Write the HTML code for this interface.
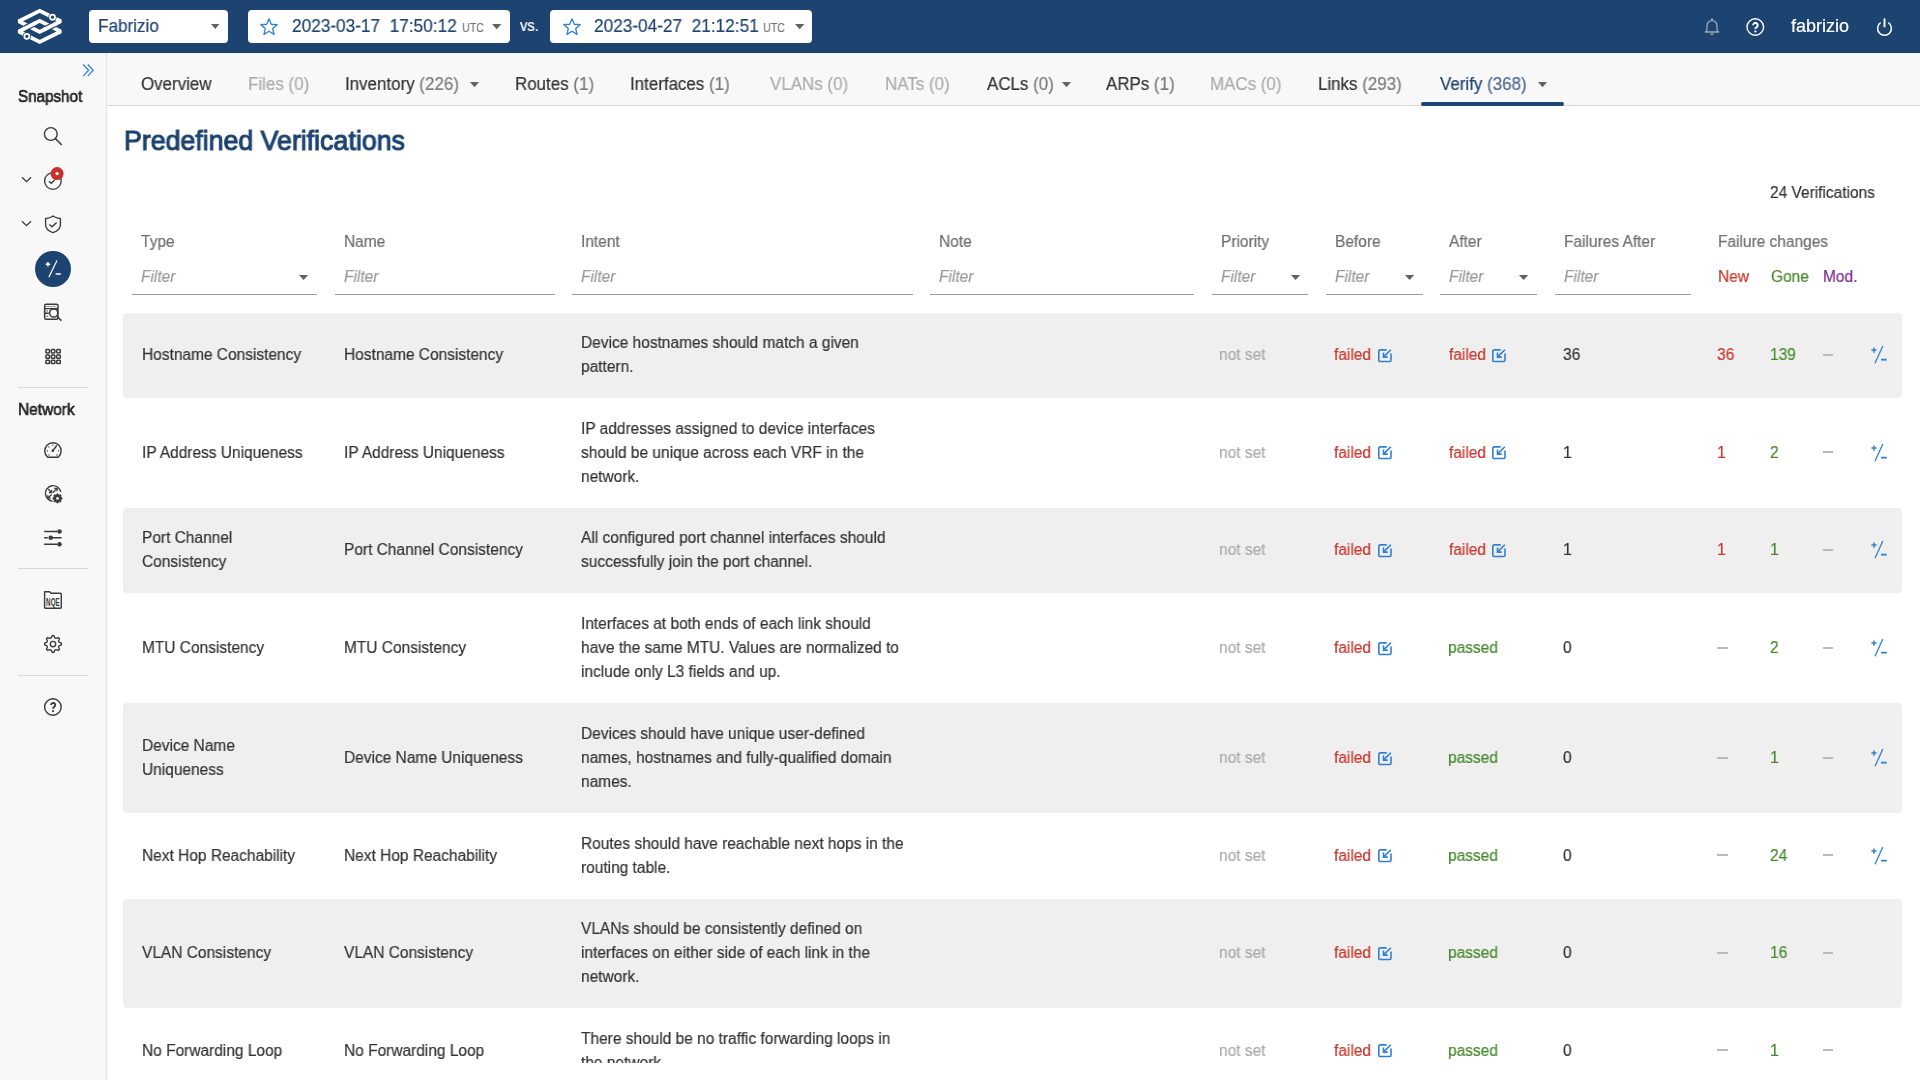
<!DOCTYPE html>
<html><head><meta charset="utf-8"><title>Predefined Verifications</title><style>
*{box-sizing:border-box}
html,body{margin:0;padding:0}
body{width:1920px;height:1080px;overflow:hidden;position:relative;background:#fff;font-family:"Liberation Sans",sans-serif;}
.t{position:absolute;white-space:nowrap;will-change:transform;-webkit-text-stroke:0.2px currentColor}
.ic{position:absolute;overflow:visible}
.box{position:absolute}
</style></head><body>
<div class="box" style="left:0;top:0;width:1920px;height:53px;background:#1d4370"></div>
<svg class="ic" style="left:14px;top:5px;" width="52" height="44" viewBox="0 0 1276 1080"><path d="M630 390L116 650L630 905L1148 650Z" stroke="#fff" stroke-width="92" fill="none" stroke-linejoin="miter" stroke-miterlimit="1.5"/><path d="M630 145L116 400L630 660L1148 400Z" stroke="#fff" stroke-width="92" fill="none" stroke-linejoin="miter" stroke-miterlimit="1.5"/><path d="M785 582L993 478" stroke="#1d4370" stroke-width="152" stroke-linecap="butt" fill="none"/><path d="M734 608L1044 452" stroke="#fff" stroke-width="92" stroke-linecap="butt" fill="none"/><path d="M476 468L270 572" stroke="#1d4370" stroke-width="152" stroke-linecap="butt" fill="none"/><path d="M527 442L219 598" stroke="#fff" stroke-width="92" stroke-linecap="butt" fill="none"/><circle cx="945" cy="300" r="100" fill="#1d4370"/><circle cx="945" cy="300" r="62" fill="none" stroke="#fff" stroke-width="44"/><circle cx="315" cy="770" r="100" fill="#1d4370"/><circle cx="315" cy="770" r="62" fill="none" stroke="#fff" stroke-width="44"/></svg>
<div class="box" style="left:89px;top:10px;width:139px;height:33px;background:#fff;border-radius:4px"></div>
<div class="t" style="left:98.30px;top:13.94px;font-size:17.5px;line-height:24px;color:#1d4370;transform:scaleX(0.978);transform-origin:0 0;">Fabrizio</div>
<svg class="ic" style="left:210.8px;top:24.2px;" width="8.4" height="5" viewBox="0 0 8.4 5"><path d="M0 0H8.4L4.2 5Z" fill="#616161"/></svg>
<div class="box" style="left:247.8px;top:10.2px;width:262.3px;height:32.8px;background:#fff;border-radius:4px"></div>
<svg class="ic" style="left:260.3px;top:17.6px;" width="18" height="18" viewBox="0 0 18 18"><polygon points="9.00,0.80 11.29,6.24 17.18,6.74 12.71,10.61 14.05,16.36 9.00,13.30 3.95,16.36 5.29,10.61 0.82,6.74 6.71,6.24" fill="none" stroke="#2f80d1" stroke-width="1.3" stroke-linejoin="round"/></svg>
<div class="t" style="left:291.60px;top:13.94px;font-size:17.5px;line-height:24px;color:#1d4370;transform:scaleX(0.984);transform-origin:0 0;">2023-03-17&nbsp; 17:50:12</div>
<div class="t" style="left:461.60px;top:18.50px;font-size:13px;line-height:18px;color:#757575;transform:scaleX(0.82);transform-origin:0 0;">UTC</div>
<svg class="ic" style="left:492.3px;top:24.2px;" width="9.4" height="5.2" viewBox="0 0 9.4 5.2"><path d="M0 0H9.4L4.7 5.2Z" fill="#616161"/></svg>
<div class="box" style="left:549.5px;top:10.2px;width:262.3px;height:32.8px;background:#fff;border-radius:4px"></div>
<svg class="ic" style="left:562.5px;top:17.6px;" width="18" height="18" viewBox="0 0 18 18"><polygon points="9.00,0.80 11.29,6.24 17.18,6.74 12.71,10.61 14.05,16.36 9.00,13.30 3.95,16.36 5.29,10.61 0.82,6.74 6.71,6.24" fill="none" stroke="#2f80d1" stroke-width="1.3" stroke-linejoin="round"/></svg>
<div class="t" style="left:593.75px;top:13.94px;font-size:17.5px;line-height:24px;color:#1d4370;transform:scaleX(0.984);transform-origin:0 0;">2023-04-27&nbsp; 21:12:51</div>
<div class="t" style="left:763.00px;top:18.50px;font-size:13px;line-height:18px;color:#757575;transform:scaleX(0.82);transform-origin:0 0;">UTC</div>
<svg class="ic" style="left:794.5px;top:24.2px;" width="9.4" height="5.2" viewBox="0 0 9.4 5.2"><path d="M0 0H9.4L4.7 5.2Z" fill="#616161"/></svg>
<div class="t" style="left:520.30px;top:15.46px;font-size:16px;line-height:22px;color:#fff;transform:scaleX(0.92);transform-origin:0 0;">vs.</div>
<svg class="ic" style="left:1703.8px;top:17.6px;" width="16" height="18" viewBox="0 0 16 18"><path d="M3 12.4V7.6a5 5 0 0 1 10 0v4.8l1.7 1.6H1.3z" fill="none" stroke="#9aa9bd" stroke-width="1.3" stroke-linejoin="round"/><circle cx="8" cy="1.4" r="1.1" fill="#9aa9bd"/><path d="M6.2 15.4a1.8 1.8 0 0 0 3.6 0z" fill="#9aa9bd"/></svg>
<svg class="ic" style="left:1746px;top:17.9px;" width="18.6" height="18" viewBox="0 0 18.6 18"><circle cx="9.3" cy="9" r="8.3" fill="none" stroke="#fff" stroke-width="1.4"/><path d="M7.1 7.2a2.3 2.3 0 1 1 3.6 1.9c-.85.55-1.3.95-1.3 2.0" fill="none" stroke="#fff" stroke-width="2"/><circle cx="9.4" cy="13.4" r="1.15" fill="#fff"/></svg>
<div class="t" style="left:1790.80px;top:14.36px;font-size:18px;line-height:25px;color:#fff;">fabrizio</div>
<svg class="ic" style="left:1876px;top:17.6px;" width="17" height="18" viewBox="0 0 17 18"><path d="M4.6 4.7A6.9 6.9 0 1 0 12.4 4.7" fill="none" stroke="#fff" stroke-width="1.5"/><path d="M8.5 1.2V8.4" stroke="#fff" stroke-width="1.9" stroke-linecap="round"/></svg>
<div class="box" style="left:0;top:53px;width:107px;height:1027px;background:#f8f8f8;border-right:1px solid #e4e4e4;box-shadow:1px 0 2px rgba(0,0,0,0.04)"></div>
<svg class="ic" style="left:82px;top:63px;" width="13" height="15" viewBox="0 0 13 15"><path d="M1.2 1.2L6.6 7L1.2 12.8M5.8 1.2L11.2 7L5.8 12.8" fill="none" stroke="#2f80d1" stroke-width="1.25" transform="translate(0,0.3)"/></svg>
<div class="t" style="left:18.30px;top:86.06px;font-size:16px;line-height:22px;color:#222;transform:scaleX(0.95);transform-origin:0 0;-webkit-text-stroke:0.6px #222;">Snapshot</div>
<svg class="ic" style="left:41px;top:124px;" width="24" height="24" viewBox="0 0 24 24"><circle cx="9.8" cy="10" r="6.4" fill="none" stroke="#3a3a3a" stroke-width="1.4"/><path d="M14.4 14.6L20.8 21" stroke="#3a3a3a" stroke-width="1.5"/></svg>
<svg class="ic" style="left:21px;top:176.0px;" width="11" height="7" viewBox="0 0 11 7"><path d="M1 1.2L5.5 5.6L10 1.2" fill="none" stroke="#3a3a3a" stroke-width="1.3"/></svg>
<svg class="ic" style="left:21px;top:219.5px;" width="11" height="7" viewBox="0 0 11 7"><path d="M1 1.2L5.5 5.6L10 1.2" fill="none" stroke="#3a3a3a" stroke-width="1.3"/></svg>
<svg class="ic" style="left:41px;top:168.6px;" width="24" height="24" viewBox="0 0 24 24"><circle cx="11.9" cy="12" r="8.3" fill="none" stroke="#3a3a3a" stroke-width="1.35"/><path d="M8 12.2L10.3 14.3L13.8 10.8" fill="none" stroke="#3a3a3a" stroke-width="1.3"/><circle cx="16.1" cy="4.6" r="6.5" fill="#c9302c"/><circle cx="16.1" cy="4.6" r="1.7" fill="#fff"/></svg>
<svg class="ic" style="left:41px;top:212px;" width="24" height="24" viewBox="0 0 24 24"><path d="M12 3.9C10.5 5.2 8.2 5.9 4.6 6.4V12.6C4.6 16.6 7.6 19.4 12 20.7C16.4 19.4 19.4 16.6 19.4 12.6V6.4C15.8 5.9 13.5 5.2 12 3.9Z" fill="none" stroke="#3a3a3a" stroke-width="1.35" stroke-linejoin="round"/><path d="M8.4 12.5L11 14.8L15.6 10.4" fill="none" stroke="#3a3a3a" stroke-width="1.35"/></svg>
<div class="box" style="left:35px;top:250.8px;width:35.8px;height:35.8px;border-radius:50%;background:#1d4370"></div>
<svg class="ic" style="left:35px;top:250.8px;" width="36" height="36" viewBox="0 0 36 36"><path d="M10.6 13.3H15.2M12.9 11V15.6" stroke="#fff" stroke-width="1.5"/><path d="M22 9.6L13.8 26.3" stroke="#fff" stroke-width="1.2"/><path d="M20.6 23H25.8" stroke="#fff" stroke-width="1.5"/></svg>
<svg class="ic" style="left:40.3px;top:300.2px;" width="24" height="24" viewBox="0 0 24 24"><rect x="4.65" y="4.35" width="13.3" height="15.0" rx="1.5" fill="none" stroke="#3a3a3a" stroke-width="1.5"/><path d="M4.65 8.6H17.9M4.65 13.2H8.8" stroke="#3a3a3a" stroke-width="1.4"/><path d="M6.4 6.5H16.2" stroke="#3a3a3a" stroke-width="0.9" stroke-dasharray="1 1"/><path d="M6.2 11H8M6.2 16.3H8" stroke="#3a3a3a" stroke-width="0.8"/><circle cx="13.7" cy="13.0" r="4.1" fill="#f8f8f8" stroke="#3a3a3a" stroke-width="1.5"/><path d="M16.8 16.2L21.4 20.6" stroke="#3a3a3a" stroke-width="1.5"/></svg>
<svg class="ic" style="left:41px;top:345px;" width="24" height="24" viewBox="0 0 24 24"><rect x="4.9" y="4.6" width="3.6" height="3.4" rx="0.9" fill="none" stroke="#3a3a3a" stroke-width="1.5"/><rect x="4.9" y="9.9" width="3.6" height="3.4" rx="0.9" fill="none" stroke="#3a3a3a" stroke-width="1.5"/><rect x="4.9" y="15.2" width="3.6" height="3.4" rx="0.9" fill="none" stroke="#3a3a3a" stroke-width="1.5"/><rect x="10.3" y="4.6" width="3.6" height="3.4" rx="0.9" fill="none" stroke="#3a3a3a" stroke-width="1.5"/><rect x="10.3" y="9.9" width="3.6" height="3.4" rx="0.9" fill="none" stroke="#3a3a3a" stroke-width="1.5"/><rect x="10.3" y="15.2" width="3.6" height="3.4" rx="0.9" fill="none" stroke="#3a3a3a" stroke-width="1.5"/><rect x="15.7" y="4.6" width="3.6" height="3.4" rx="0.9" fill="none" stroke="#3a3a3a" stroke-width="1.5"/><rect x="15.7" y="9.9" width="3.6" height="3.4" rx="0.9" fill="none" stroke="#3a3a3a" stroke-width="1.5"/><rect x="15.7" y="15.2" width="3.6" height="3.4" rx="0.9" fill="none" stroke="#3a3a3a" stroke-width="1.5"/></svg>
<div class="box" style="left:18px;top:387px;width:70px;height:1px;background:#d9d9d9"></div>
<div class="box" style="left:18px;top:568px;width:70px;height:1px;background:#d9d9d9"></div>
<div class="box" style="left:18px;top:675px;width:70px;height:1px;background:#d9d9d9"></div>
<div class="t" style="left:18.10px;top:399.26px;font-size:16px;line-height:22px;color:#222;transform:scaleX(0.965);transform-origin:0 0;-webkit-text-stroke:0.6px #222;">Network</div>
<svg class="ic" style="left:41.1px;top:437.8px;" width="24" height="24" viewBox="0 0 24 24"><path d="M6.7 19.2A8.2 8.2 0 1 1 17.2 19.2Z" fill="none" stroke="#3a3a3a" stroke-width="1.4" stroke-linejoin="round"/><path d="M11.8 12.7L15.9 7.4" stroke="#3a3a3a" stroke-width="1.5"/><circle cx="11.8" cy="12.7" r="1.3" fill="#3a3a3a"/><g fill="#3a3a3a"><circle cx="11.9" cy="7.2" r="0.65"/><circle cx="7.9" cy="8.9" r="0.65"/><circle cx="6.4" cy="12.9" r="0.65"/><circle cx="17.5" cy="12.9" r="0.65"/><circle cx="8.0" cy="17.0" r="0.65"/><circle cx="15.9" cy="17.0" r="0.65"/></g></svg>
<svg class="ic" style="left:41px;top:480.6px;" width="24" height="24" viewBox="0 0 24 24"><path d="M13.4 19.9A7.7 7.7 0 1 1 19.7 11.0" fill="none" stroke="#3a3a3a" stroke-width="1.35"/><path d="M7.1 8.0L10.7 11.7M10.7 8.9V11.7H7.9" stroke="#3a3a3a" stroke-width="1.25" fill="none"/><path d="M11.9 11.7L16.1 7.4M13.3 7.4H16.1V10.2" stroke="#3a3a3a" stroke-width="1.25" fill="none"/><path d="M10.7 13.5L6.8 17.1M6.8 14.3V17.1H9.6" stroke="#3a3a3a" stroke-width="1.25" fill="none"/><circle cx="16.5" cy="17.4" r="5.6" fill="#f8f8f8"/><polygon points="21.40,17.40 19.83,18.78 19.96,20.86 17.88,20.73 16.50,22.30 15.12,20.73 13.04,20.86 13.17,18.78 11.60,17.40 13.17,16.02 13.04,13.94 15.12,14.07 16.50,12.50 17.88,14.07 19.96,13.94 19.83,16.02" fill="#3a3a3a" stroke="#3a3a3a" stroke-width="0.9" stroke-linejoin="round"/><circle cx="16.5" cy="17.4" r="1.4" fill="#f8f8f8"/></svg>
<svg class="ic" style="left:41px;top:528px;" width="24" height="20" viewBox="0 0 24 20"><path d="M3.2 3.5H16M3.2 16.2H16M3.2 9.8H6.8M11.3 9.8H20.6" stroke="#3a3a3a" stroke-width="1.4"/><circle cx="18.5" cy="3.5" r="2.3" fill="#3a3a3a"/><circle cx="18.5" cy="16.2" r="2.3" fill="#3a3a3a"/><circle cx="9.7" cy="9.8" r="2.3" fill="#3a3a3a"/></svg>
<svg class="ic" style="left:40px;top:589px;" width="24" height="22" viewBox="0 0 24 22"><path d="M4.6 2.7H9.6L11.0 4.2H20.3A1 1 0 0 1 21.3 5.2V18.3A1 1 0 0 1 20.3 19.3H5.6A1 1 0 0 1 4.6 18.3Z" fill="none" stroke="#3a3a3a" stroke-width="1.4" stroke-linejoin="round"/><text x="6.1" y="16.6" font-family="Liberation Sans" font-weight="bold" font-size="10" textLength="13.6" lengthAdjust="spacingAndGlyphs" fill="#3a3a3a">NQE</text></svg>
<svg class="ic" style="left:41px;top:632.2px;" width="24" height="24" viewBox="0 0 24 24"><polygon points="11.18,3.64 12.82,3.64 13.83,5.97 14.97,6.44 17.33,5.51 18.49,6.67 17.56,9.03 18.03,10.17 20.36,11.18 20.36,12.82 18.03,13.83 17.56,14.97 18.49,17.33 17.33,18.49 14.97,17.56 13.83,18.03 12.82,20.36 11.18,20.36 10.17,18.03 9.03,17.56 6.67,18.49 5.51,17.33 6.44,14.97 5.97,13.83 3.64,12.82 3.64,11.18 5.97,10.17 6.44,9.03 5.51,6.67 6.67,5.51 9.03,6.44 10.17,5.97" fill="none" stroke="#3a3a3a" stroke-width="1.35" stroke-linejoin="round"/><circle cx="12" cy="12" r="2.7" fill="none" stroke="#3a3a3a" stroke-width="1.35"/></svg>
<svg class="ic" style="left:41px;top:694.8px;" width="24" height="24" viewBox="0 0 24 24"><circle cx="11.9" cy="12" r="8.3" fill="none" stroke="#3a3a3a" stroke-width="1.4"/><path d="M10.1 10.0a2.05 2.05 0 1 1 3.2 1.7c-.8.55-1.25.95-1.25 1.95" fill="none" stroke="#3a3a3a" stroke-width="1.9"/><circle cx="12" cy="16.1" r="1.1" fill="#3a3a3a"/></svg>
<div class="box" style="left:107px;top:53px;width:1813px;height:53px;background:#f8f8f8;border-bottom:1px solid #d9d9d9"></div>
<div class="t" style="left:141.25px;top:72.24px;font-size:17.5px;line-height:24px;color:#333;transform:scaleX(0.967);transform-origin:0 0;"><span style="color:#333">Overview</span></div>
<div class="t" style="left:248.00px;top:72.24px;font-size:17.5px;line-height:24px;color:#acacac;transform:scaleX(0.967);transform-origin:0 0;"><span style="color:#acacac">Files</span> <span style="color:#acacac">(0)</span></div>
<div class="t" style="left:345.00px;top:72.24px;font-size:17.5px;line-height:24px;color:#333;transform:scaleX(0.967);transform-origin:0 0;"><span style="color:#333">Inventory</span> <span style="color:#7a7a7a">(226)</span></div>
<svg class="ic" style="left:470.2px;top:81.9px;" width="9" height="5.3" viewBox="0 0 9 5.3"><path d="M0 0H9L4.5 5.3Z" fill="#616161"/></svg>
<div class="t" style="left:515.00px;top:72.24px;font-size:17.5px;line-height:24px;color:#333;transform:scaleX(0.967);transform-origin:0 0;"><span style="color:#333">Routes</span> <span style="color:#7a7a7a">(1)</span></div>
<div class="t" style="left:630.00px;top:72.24px;font-size:17.5px;line-height:24px;color:#333;transform:scaleX(0.967);transform-origin:0 0;"><span style="color:#333">Interfaces</span> <span style="color:#7a7a7a">(1)</span></div>
<div class="t" style="left:770.00px;top:72.24px;font-size:17.5px;line-height:24px;color:#acacac;transform:scaleX(0.967);transform-origin:0 0;"><span style="color:#acacac">VLANs</span> <span style="color:#acacac">(0)</span></div>
<div class="t" style="left:884.50px;top:72.24px;font-size:17.5px;line-height:24px;color:#acacac;transform:scaleX(0.967);transform-origin:0 0;"><span style="color:#acacac">NATs</span> <span style="color:#acacac">(0)</span></div>
<div class="t" style="left:987.00px;top:72.24px;font-size:17.5px;line-height:24px;color:#333;transform:scaleX(0.967);transform-origin:0 0;"><span style="color:#333">ACLs</span> <span style="color:#7a7a7a">(0)</span></div>
<svg class="ic" style="left:1061.5px;top:81.9px;" width="9" height="5.3" viewBox="0 0 9 5.3"><path d="M0 0H9L4.5 5.3Z" fill="#616161"/></svg>
<div class="t" style="left:1106.00px;top:72.24px;font-size:17.5px;line-height:24px;color:#333;transform:scaleX(0.967);transform-origin:0 0;"><span style="color:#333">ARPs</span> <span style="color:#7a7a7a">(1)</span></div>
<div class="t" style="left:1209.50px;top:72.24px;font-size:17.5px;line-height:24px;color:#acacac;transform:scaleX(0.967);transform-origin:0 0;"><span style="color:#acacac">MACs</span> <span style="color:#acacac">(0)</span></div>
<div class="t" style="left:1317.50px;top:72.24px;font-size:17.5px;line-height:24px;color:#333;transform:scaleX(0.967);transform-origin:0 0;"><span style="color:#333">Links</span> <span style="color:#7a7a7a">(293)</span></div>
<div class="t" style="left:1439.50px;top:72.24px;font-size:17.5px;line-height:24px;color:#1d4370;transform:scaleX(0.967);transform-origin:0 0;"><span style="color:#1d4370">Verify</span> <span style="color:#4d6b91">(368)</span></div>
<svg class="ic" style="left:1537.7px;top:81.9px;" width="9" height="5.3" viewBox="0 0 9 5.3"><path d="M0 0H9L4.5 5.3Z" fill="#616161"/></svg>
<div class="box" style="left:1421px;top:101.6px;width:143px;height:4px;border-radius:2px;background:#1d4370"></div>
<div class="t" style="left:124.00px;top:121.74px;font-size:27px;line-height:38px;color:#1d4370;transform:scaleX(0.99);transform-origin:0 0;-webkit-text-stroke:1.05px #1d4370;">Predefined Verifications</div>
<div class="t" style="left:1769.60px;top:182.21px;font-size:16px;line-height:22px;color:#333;transform:scaleX(0.967);transform-origin:0 0;">24 Verifications</div>
<div class="t" style="left:141.25px;top:230.96px;font-size:16px;line-height:22px;color:#6e6e6e;transform:scaleX(0.967);transform-origin:0 0;">Type</div>
<div class="t" style="left:343.75px;top:230.96px;font-size:16px;line-height:22px;color:#6e6e6e;transform:scaleX(0.967);transform-origin:0 0;">Name</div>
<div class="t" style="left:581.25px;top:230.96px;font-size:16px;line-height:22px;color:#6e6e6e;transform:scaleX(0.967);transform-origin:0 0;">Intent</div>
<div class="t" style="left:939.25px;top:230.96px;font-size:16px;line-height:22px;color:#6e6e6e;transform:scaleX(0.967);transform-origin:0 0;">Note</div>
<div class="t" style="left:1220.50px;top:230.96px;font-size:16px;line-height:22px;color:#6e6e6e;transform:scaleX(0.967);transform-origin:0 0;">Priority</div>
<div class="t" style="left:1335.00px;top:230.96px;font-size:16px;line-height:22px;color:#6e6e6e;transform:scaleX(0.967);transform-origin:0 0;">Before</div>
<div class="t" style="left:1449.25px;top:230.96px;font-size:16px;line-height:22px;color:#6e6e6e;transform:scaleX(0.967);transform-origin:0 0;">After</div>
<div class="t" style="left:1563.75px;top:230.96px;font-size:16px;line-height:22px;color:#6e6e6e;transform:scaleX(0.967);transform-origin:0 0;">Failures After</div>
<div class="t" style="left:1717.50px;top:230.96px;font-size:16px;line-height:22px;color:#6e6e6e;transform:scaleX(0.967);transform-origin:0 0;">Failure changes</div>
<div class="t" style="left:141.25px;top:266.46px;font-size:16px;line-height:22px;color:#9a9a9a;font-style:italic;transform:scaleX(0.967);transform-origin:0 0;">Filter</div>
<div class="box" style="left:132px;top:293.8px;width:185px;height:1.2px;background:#9e9e9e"></div>
<svg class="ic" style="left:299px;top:274.5px;" width="9.2" height="5.1" viewBox="0 0 9.2 5.1"><path d="M0 0H9.2L4.6 5.1Z" fill="#616161"/></svg>
<div class="t" style="left:343.75px;top:266.46px;font-size:16px;line-height:22px;color:#9a9a9a;font-style:italic;transform:scaleX(0.967);transform-origin:0 0;">Filter</div>
<div class="box" style="left:335px;top:293.8px;width:219.5px;height:1.2px;background:#9e9e9e"></div>
<div class="t" style="left:581.25px;top:266.46px;font-size:16px;line-height:22px;color:#9a9a9a;font-style:italic;transform:scaleX(0.967);transform-origin:0 0;">Filter</div>
<div class="box" style="left:572px;top:293.8px;width:340.5px;height:1.2px;background:#9e9e9e"></div>
<div class="t" style="left:939.25px;top:266.46px;font-size:16px;line-height:22px;color:#9a9a9a;font-style:italic;transform:scaleX(0.967);transform-origin:0 0;">Filter</div>
<div class="box" style="left:930px;top:293.8px;width:264px;height:1.2px;background:#9e9e9e"></div>
<div class="t" style="left:1220.50px;top:266.46px;font-size:16px;line-height:22px;color:#9a9a9a;font-style:italic;transform:scaleX(0.967);transform-origin:0 0;">Filter</div>
<div class="box" style="left:1211.5px;top:293.8px;width:96.75px;height:1.2px;background:#9e9e9e"></div>
<svg class="ic" style="left:1290.8px;top:274.5px;" width="9.2" height="5.1" viewBox="0 0 9.2 5.1"><path d="M0 0H9.2L4.6 5.1Z" fill="#616161"/></svg>
<div class="t" style="left:1335.00px;top:266.46px;font-size:16px;line-height:22px;color:#9a9a9a;font-style:italic;transform:scaleX(0.967);transform-origin:0 0;">Filter</div>
<div class="box" style="left:1326px;top:293.8px;width:96.75px;height:1.2px;background:#9e9e9e"></div>
<svg class="ic" style="left:1405.2px;top:274.5px;" width="9.2" height="5.1" viewBox="0 0 9.2 5.1"><path d="M0 0H9.2L4.6 5.1Z" fill="#616161"/></svg>
<div class="t" style="left:1449.25px;top:266.46px;font-size:16px;line-height:22px;color:#9a9a9a;font-style:italic;transform:scaleX(0.967);transform-origin:0 0;">Filter</div>
<div class="box" style="left:1440.25px;top:293.8px;width:96.75px;height:1.2px;background:#9e9e9e"></div>
<svg class="ic" style="left:1519.3px;top:274.5px;" width="9.2" height="5.1" viewBox="0 0 9.2 5.1"><path d="M0 0H9.2L4.6 5.1Z" fill="#616161"/></svg>
<div class="t" style="left:1563.75px;top:266.46px;font-size:16px;line-height:22px;color:#9a9a9a;font-style:italic;transform:scaleX(0.967);transform-origin:0 0;">Filter</div>
<div class="box" style="left:1555px;top:293.8px;width:135.75px;height:1.2px;background:#9e9e9e"></div>
<div class="t" style="left:1718.00px;top:266.46px;font-size:16px;line-height:22px;color:#c8372d;transform:scaleX(0.967);transform-origin:0 0;">New</div>
<div class="t" style="left:1770.50px;top:266.46px;font-size:16px;line-height:22px;color:#46892c;transform:scaleX(0.967);transform-origin:0 0;">Gone</div>
<div class="t" style="left:1823.25px;top:266.46px;font-size:16px;line-height:22px;color:#7e2b8e;transform:scaleX(0.967);transform-origin:0 0;">Mod.</div>
<div class="box" style="left:123px;top:312.5px;width:1779.2px;height:85.5px;background:#efefef;border-radius:4px"></div>
<div class="t" style="left:141.50px;top:344.16px;font-size:16px;line-height:22px;color:#333;transform:scaleX(0.967);transform-origin:0 0;">Hostname Consistency</div>
<div class="t" style="left:343.50px;top:344.16px;font-size:16px;line-height:22px;color:#333;transform:scaleX(0.967);transform-origin:0 0;">Hostname Consistency</div>
<div class="t" style="left:581.00px;top:332.16px;font-size:16px;line-height:22px;color:#333;transform:scaleX(0.967);transform-origin:0 0;">Device hostnames should match a given</div>
<div class="t" style="left:581.00px;top:356.16px;font-size:16px;line-height:22px;color:#333;transform:scaleX(0.967);transform-origin:0 0;">pattern.</div>
<div class="t" style="left:1218.80px;top:344.16px;font-size:16px;line-height:22px;color:#ababab;transform:scaleX(0.967);transform-origin:0 0;">not set</div>
<div class="t" style="left:1334.00px;top:344.16px;font-size:16px;line-height:22px;color:#c8372d;transform:scaleX(0.967);transform-origin:0 0;">failed</div>
<svg class="ic" style="left:1378px;top:348.75px;" width="14" height="14" viewBox="0 0 14 14"><path d="M8.7 0.85H2.1A1.3 1.3 0 0 0 0.8 2.15V11.2A1.3 1.3 0 0 0 2.1 12.5H11.7A1.3 1.3 0 0 0 13 11.2V4.6" fill="none" stroke="#2f80d1" stroke-width="1.6"/><path d="M12.9 0.7L5.6 7.9" stroke="#2f80d1" stroke-width="1.6"/><path d="M5.5 3.6V8.1H9.8" fill="none" stroke="#2f80d1" stroke-width="1.6"/></svg>
<div class="t" style="left:1448.60px;top:344.16px;font-size:16px;line-height:22px;color:#c8372d;transform:scaleX(0.967);transform-origin:0 0;">failed</div>
<svg class="ic" style="left:1492px;top:348.75px;" width="14" height="14" viewBox="0 0 14 14"><path d="M8.7 0.85H2.1A1.3 1.3 0 0 0 0.8 2.15V11.2A1.3 1.3 0 0 0 2.1 12.5H11.7A1.3 1.3 0 0 0 13 11.2V4.6" fill="none" stroke="#2f80d1" stroke-width="1.6"/><path d="M12.9 0.7L5.6 7.9" stroke="#2f80d1" stroke-width="1.6"/><path d="M5.5 3.6V8.1H9.8" fill="none" stroke="#2f80d1" stroke-width="1.6"/></svg>
<div class="t" style="left:1562.50px;top:344.16px;font-size:16px;line-height:22px;color:#333;transform:scaleX(0.967);transform-origin:0 0;">36</div>
<div class="t" style="left:1717.00px;top:344.16px;font-size:16px;line-height:22px;color:#c8372d;transform:scaleX(0.967);transform-origin:0 0;">36</div>
<div class="t" style="left:1769.80px;top:344.16px;font-size:16px;line-height:22px;color:#46892c;transform:scaleX(0.967);transform-origin:0 0;">139</div>
<div class="box" style="left:1822.9px;top:354px;width:10.3px;height:1.6px;background:#bababa"></div>
<svg class="ic" style="left:1871px;top:346.25px;" width="16" height="18" viewBox="0 0 16 18"><path d="M0.4 4.1H5.6M3 1.5V6.7" stroke="#2f80d1" stroke-width="1.5"/><path d="M11.8 0L4 17.35" stroke="#2f80d1" stroke-width="1.3"/><path d="M10 13.65H15.7" stroke="#2f80d1" stroke-width="1.8"/></svg>
<div class="t" style="left:141.50px;top:441.76px;font-size:16px;line-height:22px;color:#333;transform:scaleX(0.967);transform-origin:0 0;">IP Address Uniqueness</div>
<div class="t" style="left:343.50px;top:441.76px;font-size:16px;line-height:22px;color:#333;transform:scaleX(0.967);transform-origin:0 0;">IP Address Uniqueness</div>
<div class="t" style="left:581.00px;top:417.76px;font-size:16px;line-height:22px;color:#333;transform:scaleX(0.967);transform-origin:0 0;">IP addresses assigned to device interfaces</div>
<div class="t" style="left:581.00px;top:441.76px;font-size:16px;line-height:22px;color:#333;transform:scaleX(0.967);transform-origin:0 0;">should be unique across each VRF in the</div>
<div class="t" style="left:581.00px;top:465.76px;font-size:16px;line-height:22px;color:#333;transform:scaleX(0.967);transform-origin:0 0;">network.</div>
<div class="t" style="left:1218.80px;top:441.76px;font-size:16px;line-height:22px;color:#ababab;transform:scaleX(0.967);transform-origin:0 0;">not set</div>
<div class="t" style="left:1334.00px;top:441.76px;font-size:16px;line-height:22px;color:#c8372d;transform:scaleX(0.967);transform-origin:0 0;">failed</div>
<svg class="ic" style="left:1378px;top:446.35px;" width="14" height="14" viewBox="0 0 14 14"><path d="M8.7 0.85H2.1A1.3 1.3 0 0 0 0.8 2.15V11.2A1.3 1.3 0 0 0 2.1 12.5H11.7A1.3 1.3 0 0 0 13 11.2V4.6" fill="none" stroke="#2f80d1" stroke-width="1.6"/><path d="M12.9 0.7L5.6 7.9" stroke="#2f80d1" stroke-width="1.6"/><path d="M5.5 3.6V8.1H9.8" fill="none" stroke="#2f80d1" stroke-width="1.6"/></svg>
<div class="t" style="left:1448.60px;top:441.76px;font-size:16px;line-height:22px;color:#c8372d;transform:scaleX(0.967);transform-origin:0 0;">failed</div>
<svg class="ic" style="left:1492px;top:446.35px;" width="14" height="14" viewBox="0 0 14 14"><path d="M8.7 0.85H2.1A1.3 1.3 0 0 0 0.8 2.15V11.2A1.3 1.3 0 0 0 2.1 12.5H11.7A1.3 1.3 0 0 0 13 11.2V4.6" fill="none" stroke="#2f80d1" stroke-width="1.6"/><path d="M12.9 0.7L5.6 7.9" stroke="#2f80d1" stroke-width="1.6"/><path d="M5.5 3.6V8.1H9.8" fill="none" stroke="#2f80d1" stroke-width="1.6"/></svg>
<div class="t" style="left:1562.50px;top:441.76px;font-size:16px;line-height:22px;color:#333;transform:scaleX(0.967);transform-origin:0 0;">1</div>
<div class="t" style="left:1717.00px;top:441.76px;font-size:16px;line-height:22px;color:#c8372d;transform:scaleX(0.967);transform-origin:0 0;">1</div>
<div class="t" style="left:1769.80px;top:441.76px;font-size:16px;line-height:22px;color:#46892c;transform:scaleX(0.967);transform-origin:0 0;">2</div>
<div class="box" style="left:1822.9px;top:451px;width:10.3px;height:1.6px;background:#bababa"></div>
<svg class="ic" style="left:1871px;top:443.85px;" width="16" height="18" viewBox="0 0 16 18"><path d="M0.4 4.1H5.6M3 1.5V6.7" stroke="#2f80d1" stroke-width="1.5"/><path d="M11.8 0L4 17.35" stroke="#2f80d1" stroke-width="1.3"/><path d="M10 13.65H15.7" stroke="#2f80d1" stroke-width="1.8"/></svg>
<div class="box" style="left:123px;top:507.7px;width:1779.2px;height:85.4px;background:#efefef;border-radius:4px"></div>
<div class="t" style="left:141.50px;top:527.31px;font-size:16px;line-height:22px;color:#333;transform:scaleX(0.967);transform-origin:0 0;">Port Channel</div>
<div class="t" style="left:141.50px;top:551.31px;font-size:16px;line-height:22px;color:#333;transform:scaleX(0.967);transform-origin:0 0;">Consistency</div>
<div class="t" style="left:343.50px;top:539.31px;font-size:16px;line-height:22px;color:#333;transform:scaleX(0.967);transform-origin:0 0;">Port Channel Consistency</div>
<div class="t" style="left:581.00px;top:527.31px;font-size:16px;line-height:22px;color:#333;transform:scaleX(0.967);transform-origin:0 0;">All configured port channel interfaces should</div>
<div class="t" style="left:581.00px;top:551.31px;font-size:16px;line-height:22px;color:#333;transform:scaleX(0.967);transform-origin:0 0;">successfully join the port channel.</div>
<div class="t" style="left:1218.80px;top:539.31px;font-size:16px;line-height:22px;color:#ababab;transform:scaleX(0.967);transform-origin:0 0;">not set</div>
<div class="t" style="left:1334.00px;top:539.31px;font-size:16px;line-height:22px;color:#c8372d;transform:scaleX(0.967);transform-origin:0 0;">failed</div>
<svg class="ic" style="left:1378px;top:543.9px;" width="14" height="14" viewBox="0 0 14 14"><path d="M8.7 0.85H2.1A1.3 1.3 0 0 0 0.8 2.15V11.2A1.3 1.3 0 0 0 2.1 12.5H11.7A1.3 1.3 0 0 0 13 11.2V4.6" fill="none" stroke="#2f80d1" stroke-width="1.6"/><path d="M12.9 0.7L5.6 7.9" stroke="#2f80d1" stroke-width="1.6"/><path d="M5.5 3.6V8.1H9.8" fill="none" stroke="#2f80d1" stroke-width="1.6"/></svg>
<div class="t" style="left:1448.60px;top:539.31px;font-size:16px;line-height:22px;color:#c8372d;transform:scaleX(0.967);transform-origin:0 0;">failed</div>
<svg class="ic" style="left:1492px;top:543.9px;" width="14" height="14" viewBox="0 0 14 14"><path d="M8.7 0.85H2.1A1.3 1.3 0 0 0 0.8 2.15V11.2A1.3 1.3 0 0 0 2.1 12.5H11.7A1.3 1.3 0 0 0 13 11.2V4.6" fill="none" stroke="#2f80d1" stroke-width="1.6"/><path d="M12.9 0.7L5.6 7.9" stroke="#2f80d1" stroke-width="1.6"/><path d="M5.5 3.6V8.1H9.8" fill="none" stroke="#2f80d1" stroke-width="1.6"/></svg>
<div class="t" style="left:1562.50px;top:539.31px;font-size:16px;line-height:22px;color:#333;transform:scaleX(0.967);transform-origin:0 0;">1</div>
<div class="t" style="left:1717.00px;top:539.31px;font-size:16px;line-height:22px;color:#c8372d;transform:scaleX(0.967);transform-origin:0 0;">1</div>
<div class="t" style="left:1769.80px;top:539.31px;font-size:16px;line-height:22px;color:#46892c;transform:scaleX(0.967);transform-origin:0 0;">1</div>
<div class="box" style="left:1822.9px;top:549px;width:10.3px;height:1.6px;background:#bababa"></div>
<svg class="ic" style="left:1871px;top:541.4px;" width="16" height="18" viewBox="0 0 16 18"><path d="M0.4 4.1H5.6M3 1.5V6.7" stroke="#2f80d1" stroke-width="1.5"/><path d="M11.8 0L4 17.35" stroke="#2f80d1" stroke-width="1.3"/><path d="M10 13.65H15.7" stroke="#2f80d1" stroke-width="1.8"/></svg>
<div class="t" style="left:141.50px;top:637.06px;font-size:16px;line-height:22px;color:#333;transform:scaleX(0.967);transform-origin:0 0;">MTU Consistency</div>
<div class="t" style="left:343.50px;top:637.06px;font-size:16px;line-height:22px;color:#333;transform:scaleX(0.967);transform-origin:0 0;">MTU Consistency</div>
<div class="t" style="left:581.00px;top:613.06px;font-size:16px;line-height:22px;color:#333;transform:scaleX(0.967);transform-origin:0 0;">Interfaces at both ends of each link should</div>
<div class="t" style="left:581.00px;top:637.06px;font-size:16px;line-height:22px;color:#333;transform:scaleX(0.967);transform-origin:0 0;">have the same MTU. Values are normalized to</div>
<div class="t" style="left:581.00px;top:661.06px;font-size:16px;line-height:22px;color:#333;transform:scaleX(0.967);transform-origin:0 0;">include only L3 fields and up.</div>
<div class="t" style="left:1218.80px;top:637.06px;font-size:16px;line-height:22px;color:#ababab;transform:scaleX(0.967);transform-origin:0 0;">not set</div>
<div class="t" style="left:1334.00px;top:637.06px;font-size:16px;line-height:22px;color:#c8372d;transform:scaleX(0.967);transform-origin:0 0;">failed</div>
<svg class="ic" style="left:1378px;top:641.65px;" width="14" height="14" viewBox="0 0 14 14"><path d="M8.7 0.85H2.1A1.3 1.3 0 0 0 0.8 2.15V11.2A1.3 1.3 0 0 0 2.1 12.5H11.7A1.3 1.3 0 0 0 13 11.2V4.6" fill="none" stroke="#2f80d1" stroke-width="1.6"/><path d="M12.9 0.7L5.6 7.9" stroke="#2f80d1" stroke-width="1.6"/><path d="M5.5 3.6V8.1H9.8" fill="none" stroke="#2f80d1" stroke-width="1.6"/></svg>
<div class="t" style="left:1447.80px;top:637.06px;font-size:16px;line-height:22px;color:#46892c;transform:scaleX(0.967);transform-origin:0 0;">passed</div>
<div class="t" style="left:1562.50px;top:637.06px;font-size:16px;line-height:22px;color:#333;transform:scaleX(0.967);transform-origin:0 0;">0</div>
<div class="box" style="left:1717.3px;top:647px;width:10.3px;height:1.6px;background:#bababa"></div>
<div class="t" style="left:1769.80px;top:637.06px;font-size:16px;line-height:22px;color:#46892c;transform:scaleX(0.967);transform-origin:0 0;">2</div>
<div class="box" style="left:1822.9px;top:647px;width:10.3px;height:1.6px;background:#bababa"></div>
<svg class="ic" style="left:1871px;top:639.15px;" width="16" height="18" viewBox="0 0 16 18"><path d="M0.4 4.1H5.6M3 1.5V6.7" stroke="#2f80d1" stroke-width="1.5"/><path d="M11.8 0L4 17.35" stroke="#2f80d1" stroke-width="1.3"/><path d="M10 13.65H15.7" stroke="#2f80d1" stroke-width="1.8"/></svg>
<div class="box" style="left:123px;top:703.2px;width:1779.2px;height:109.8px;background:#efefef;border-radius:4px"></div>
<div class="t" style="left:141.50px;top:735.01px;font-size:16px;line-height:22px;color:#333;transform:scaleX(0.967);transform-origin:0 0;">Device Name</div>
<div class="t" style="left:141.50px;top:759.01px;font-size:16px;line-height:22px;color:#333;transform:scaleX(0.967);transform-origin:0 0;">Uniqueness</div>
<div class="t" style="left:343.50px;top:747.01px;font-size:16px;line-height:22px;color:#333;transform:scaleX(0.967);transform-origin:0 0;">Device Name Uniqueness</div>
<div class="t" style="left:581.00px;top:723.01px;font-size:16px;line-height:22px;color:#333;transform:scaleX(0.967);transform-origin:0 0;">Devices should have unique user-defined</div>
<div class="t" style="left:581.00px;top:747.01px;font-size:16px;line-height:22px;color:#333;transform:scaleX(0.967);transform-origin:0 0;">names, hostnames and fully-qualified domain</div>
<div class="t" style="left:581.00px;top:771.01px;font-size:16px;line-height:22px;color:#333;transform:scaleX(0.967);transform-origin:0 0;">names.</div>
<div class="t" style="left:1218.80px;top:747.01px;font-size:16px;line-height:22px;color:#ababab;transform:scaleX(0.967);transform-origin:0 0;">not set</div>
<div class="t" style="left:1334.00px;top:747.01px;font-size:16px;line-height:22px;color:#c8372d;transform:scaleX(0.967);transform-origin:0 0;">failed</div>
<svg class="ic" style="left:1378px;top:751.6px;" width="14" height="14" viewBox="0 0 14 14"><path d="M8.7 0.85H2.1A1.3 1.3 0 0 0 0.8 2.15V11.2A1.3 1.3 0 0 0 2.1 12.5H11.7A1.3 1.3 0 0 0 13 11.2V4.6" fill="none" stroke="#2f80d1" stroke-width="1.6"/><path d="M12.9 0.7L5.6 7.9" stroke="#2f80d1" stroke-width="1.6"/><path d="M5.5 3.6V8.1H9.8" fill="none" stroke="#2f80d1" stroke-width="1.6"/></svg>
<div class="t" style="left:1447.80px;top:747.01px;font-size:16px;line-height:22px;color:#46892c;transform:scaleX(0.967);transform-origin:0 0;">passed</div>
<div class="t" style="left:1562.50px;top:747.01px;font-size:16px;line-height:22px;color:#333;transform:scaleX(0.967);transform-origin:0 0;">0</div>
<div class="box" style="left:1717.3px;top:757px;width:10.3px;height:1.6px;background:#bababa"></div>
<div class="t" style="left:1769.80px;top:747.01px;font-size:16px;line-height:22px;color:#46892c;transform:scaleX(0.967);transform-origin:0 0;">1</div>
<div class="box" style="left:1822.9px;top:757px;width:10.3px;height:1.6px;background:#bababa"></div>
<svg class="ic" style="left:1871px;top:749.1px;" width="16" height="18" viewBox="0 0 16 18"><path d="M0.4 4.1H5.6M3 1.5V6.7" stroke="#2f80d1" stroke-width="1.5"/><path d="M11.8 0L4 17.35" stroke="#2f80d1" stroke-width="1.3"/><path d="M10 13.65H15.7" stroke="#2f80d1" stroke-width="1.8"/></svg>
<div class="t" style="left:141.50px;top:844.66px;font-size:16px;line-height:22px;color:#333;transform:scaleX(0.967);transform-origin:0 0;">Next Hop Reachability</div>
<div class="t" style="left:343.50px;top:844.66px;font-size:16px;line-height:22px;color:#333;transform:scaleX(0.967);transform-origin:0 0;">Next Hop Reachability</div>
<div class="t" style="left:581.00px;top:832.66px;font-size:16px;line-height:22px;color:#333;transform:scaleX(0.967);transform-origin:0 0;">Routes should have reachable next hops in the</div>
<div class="t" style="left:581.00px;top:856.66px;font-size:16px;line-height:22px;color:#333;transform:scaleX(0.967);transform-origin:0 0;">routing table.</div>
<div class="t" style="left:1218.80px;top:844.66px;font-size:16px;line-height:22px;color:#ababab;transform:scaleX(0.967);transform-origin:0 0;">not set</div>
<div class="t" style="left:1334.00px;top:844.66px;font-size:16px;line-height:22px;color:#c8372d;transform:scaleX(0.967);transform-origin:0 0;">failed</div>
<svg class="ic" style="left:1378px;top:849.25px;" width="14" height="14" viewBox="0 0 14 14"><path d="M8.7 0.85H2.1A1.3 1.3 0 0 0 0.8 2.15V11.2A1.3 1.3 0 0 0 2.1 12.5H11.7A1.3 1.3 0 0 0 13 11.2V4.6" fill="none" stroke="#2f80d1" stroke-width="1.6"/><path d="M12.9 0.7L5.6 7.9" stroke="#2f80d1" stroke-width="1.6"/><path d="M5.5 3.6V8.1H9.8" fill="none" stroke="#2f80d1" stroke-width="1.6"/></svg>
<div class="t" style="left:1447.80px;top:844.66px;font-size:16px;line-height:22px;color:#46892c;transform:scaleX(0.967);transform-origin:0 0;">passed</div>
<div class="t" style="left:1562.50px;top:844.66px;font-size:16px;line-height:22px;color:#333;transform:scaleX(0.967);transform-origin:0 0;">0</div>
<div class="box" style="left:1717.3px;top:854px;width:10.3px;height:1.6px;background:#bababa"></div>
<div class="t" style="left:1769.80px;top:844.66px;font-size:16px;line-height:22px;color:#46892c;transform:scaleX(0.967);transform-origin:0 0;">24</div>
<div class="box" style="left:1822.9px;top:854px;width:10.3px;height:1.6px;background:#bababa"></div>
<svg class="ic" style="left:1871px;top:846.75px;" width="16" height="18" viewBox="0 0 16 18"><path d="M0.4 4.1H5.6M3 1.5V6.7" stroke="#2f80d1" stroke-width="1.5"/><path d="M11.8 0L4 17.35" stroke="#2f80d1" stroke-width="1.3"/><path d="M10 13.65H15.7" stroke="#2f80d1" stroke-width="1.8"/></svg>
<div class="box" style="left:123px;top:898.5px;width:1779.2px;height:109.5px;background:#efefef;border-radius:4px"></div>
<div class="t" style="left:141.50px;top:942.16px;font-size:16px;line-height:22px;color:#333;transform:scaleX(0.967);transform-origin:0 0;">VLAN Consistency</div>
<div class="t" style="left:343.50px;top:942.16px;font-size:16px;line-height:22px;color:#333;transform:scaleX(0.967);transform-origin:0 0;">VLAN Consistency</div>
<div class="t" style="left:581.00px;top:918.16px;font-size:16px;line-height:22px;color:#333;transform:scaleX(0.967);transform-origin:0 0;">VLANs should be consistently defined on</div>
<div class="t" style="left:581.00px;top:942.16px;font-size:16px;line-height:22px;color:#333;transform:scaleX(0.967);transform-origin:0 0;">interfaces on either side of each link in the</div>
<div class="t" style="left:581.00px;top:966.16px;font-size:16px;line-height:22px;color:#333;transform:scaleX(0.967);transform-origin:0 0;">network.</div>
<div class="t" style="left:1218.80px;top:942.16px;font-size:16px;line-height:22px;color:#ababab;transform:scaleX(0.967);transform-origin:0 0;">not set</div>
<div class="t" style="left:1334.00px;top:942.16px;font-size:16px;line-height:22px;color:#c8372d;transform:scaleX(0.967);transform-origin:0 0;">failed</div>
<svg class="ic" style="left:1378px;top:946.75px;" width="14" height="14" viewBox="0 0 14 14"><path d="M8.7 0.85H2.1A1.3 1.3 0 0 0 0.8 2.15V11.2A1.3 1.3 0 0 0 2.1 12.5H11.7A1.3 1.3 0 0 0 13 11.2V4.6" fill="none" stroke="#2f80d1" stroke-width="1.6"/><path d="M12.9 0.7L5.6 7.9" stroke="#2f80d1" stroke-width="1.6"/><path d="M5.5 3.6V8.1H9.8" fill="none" stroke="#2f80d1" stroke-width="1.6"/></svg>
<div class="t" style="left:1447.80px;top:942.16px;font-size:16px;line-height:22px;color:#46892c;transform:scaleX(0.967);transform-origin:0 0;">passed</div>
<div class="t" style="left:1562.50px;top:942.16px;font-size:16px;line-height:22px;color:#333;transform:scaleX(0.967);transform-origin:0 0;">0</div>
<div class="box" style="left:1717.3px;top:952px;width:10.3px;height:1.6px;background:#bababa"></div>
<div class="t" style="left:1769.80px;top:942.16px;font-size:16px;line-height:22px;color:#46892c;transform:scaleX(0.967);transform-origin:0 0;">16</div>
<div class="box" style="left:1822.9px;top:952px;width:10.3px;height:1.6px;background:#bababa"></div>
<div class="t" style="left:141.50px;top:1039.66px;font-size:16px;line-height:22px;color:#333;transform:scaleX(0.967);transform-origin:0 0;">No Forwarding Loop</div>
<div class="t" style="left:343.50px;top:1039.66px;font-size:16px;line-height:22px;color:#333;transform:scaleX(0.967);transform-origin:0 0;">No Forwarding Loop</div>
<div class="t" style="left:581.00px;top:1027.66px;font-size:16px;line-height:22px;color:#333;transform:scaleX(0.967);transform-origin:0 0;">There should be no traffic forwarding loops in</div>
<div class="t" style="left:581.00px;top:1051.66px;font-size:16px;line-height:22px;color:#333;transform:scaleX(0.967);transform-origin:0 0;">the network.</div>
<div class="t" style="left:1218.80px;top:1039.66px;font-size:16px;line-height:22px;color:#ababab;transform:scaleX(0.967);transform-origin:0 0;">not set</div>
<div class="t" style="left:1334.00px;top:1039.66px;font-size:16px;line-height:22px;color:#c8372d;transform:scaleX(0.967);transform-origin:0 0;">failed</div>
<svg class="ic" style="left:1378px;top:1044.25px;" width="14" height="14" viewBox="0 0 14 14"><path d="M8.7 0.85H2.1A1.3 1.3 0 0 0 0.8 2.15V11.2A1.3 1.3 0 0 0 2.1 12.5H11.7A1.3 1.3 0 0 0 13 11.2V4.6" fill="none" stroke="#2f80d1" stroke-width="1.6"/><path d="M12.9 0.7L5.6 7.9" stroke="#2f80d1" stroke-width="1.6"/><path d="M5.5 3.6V8.1H9.8" fill="none" stroke="#2f80d1" stroke-width="1.6"/></svg>
<div class="t" style="left:1447.80px;top:1039.66px;font-size:16px;line-height:22px;color:#46892c;transform:scaleX(0.967);transform-origin:0 0;">passed</div>
<div class="t" style="left:1562.50px;top:1039.66px;font-size:16px;line-height:22px;color:#333;transform:scaleX(0.967);transform-origin:0 0;">0</div>
<div class="box" style="left:1717.3px;top:1049px;width:10.3px;height:1.6px;background:#bababa"></div>
<div class="t" style="left:1769.80px;top:1039.66px;font-size:16px;line-height:22px;color:#46892c;transform:scaleX(0.967);transform-origin:0 0;">1</div>
<div class="box" style="left:1822.9px;top:1049px;width:10.3px;height:1.6px;background:#bababa"></div>
<div class="box" style="left:560px;top:1062.5px;width:380px;height:20px;background:#fff"></div>
</body></html>
